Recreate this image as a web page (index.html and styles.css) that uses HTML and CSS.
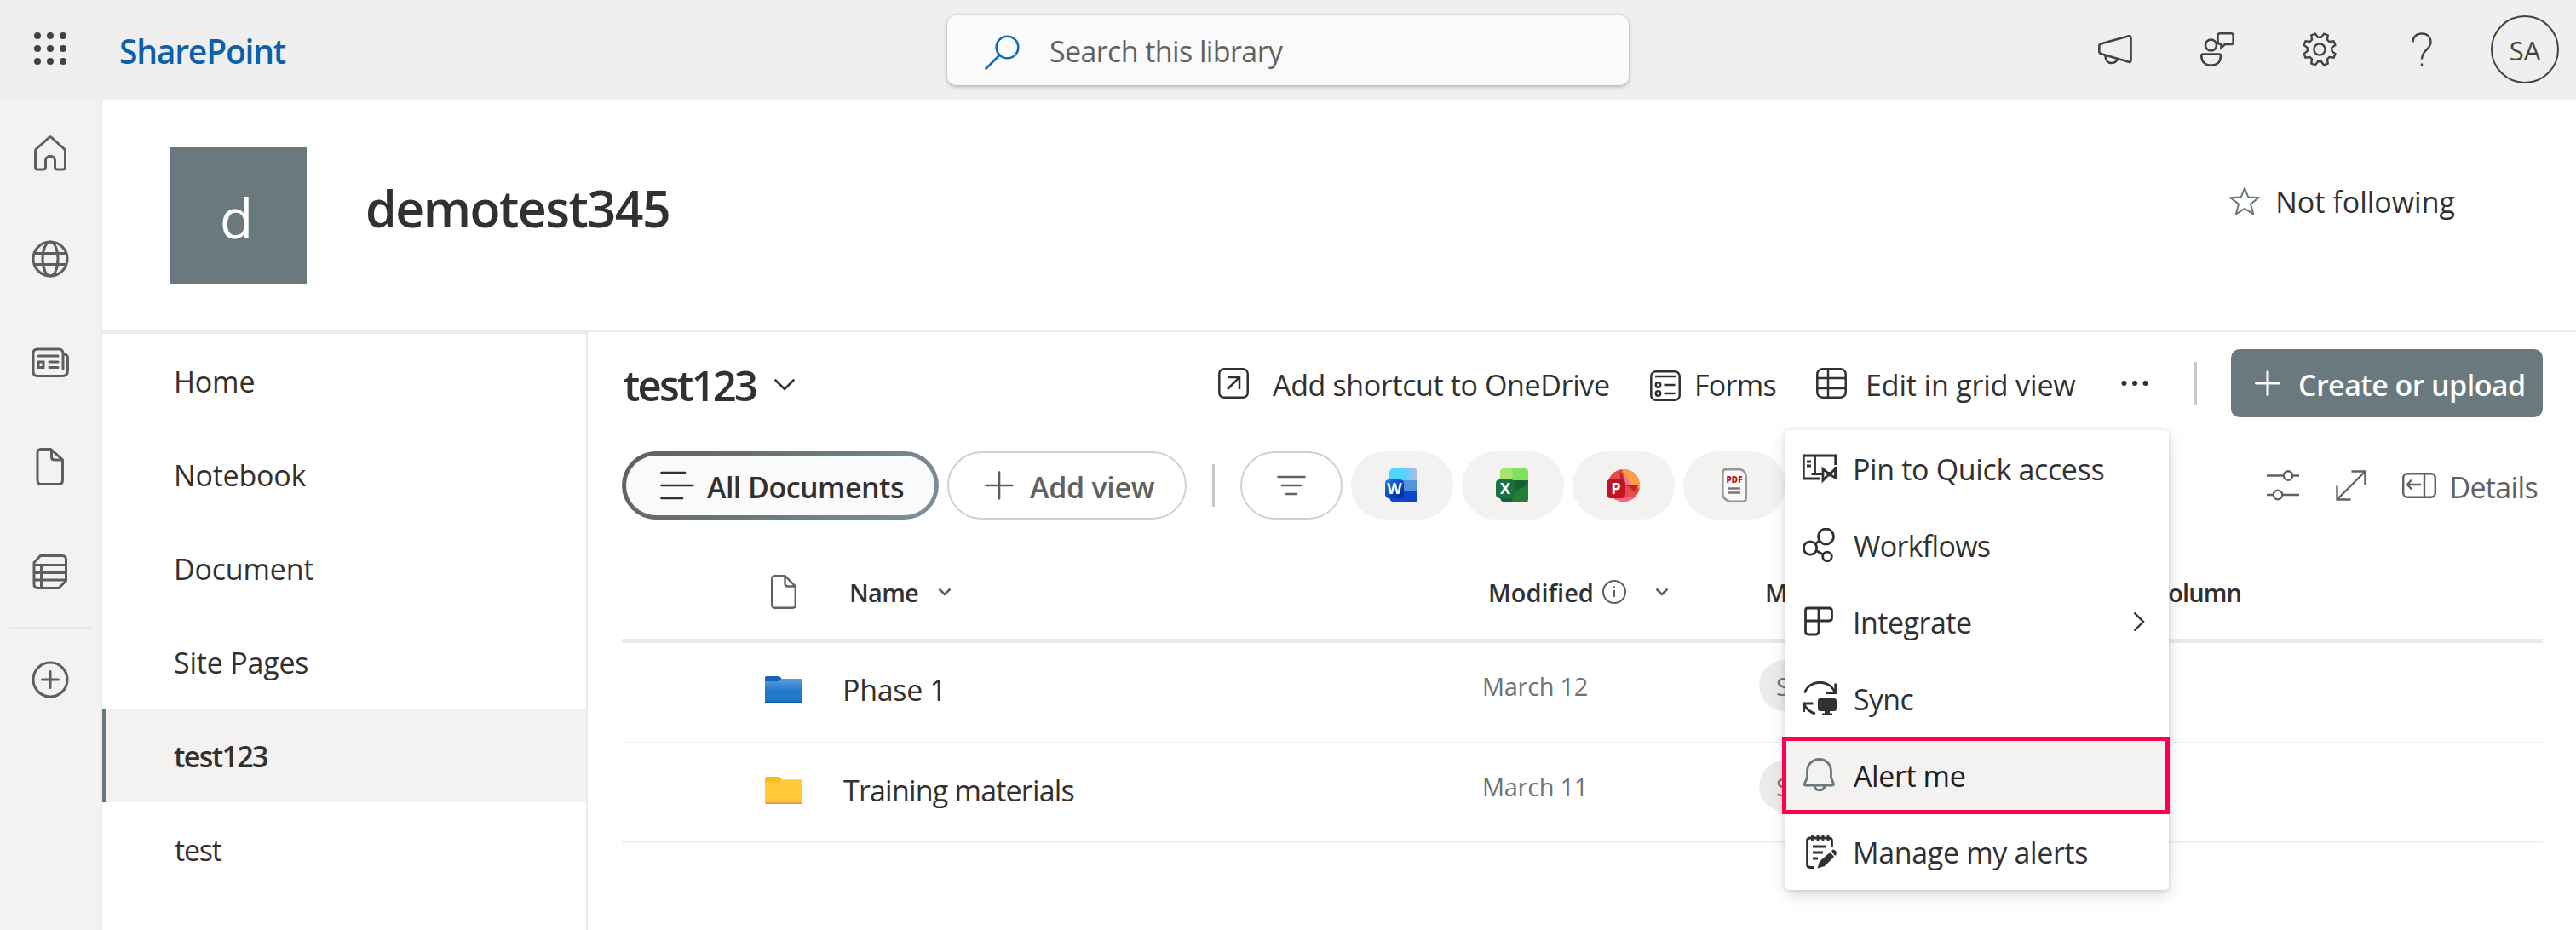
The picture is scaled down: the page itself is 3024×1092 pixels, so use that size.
FILE: index.html
```html
<!DOCTYPE html>
<html lang="en">
<head>
    <meta charset="UTF-8">
    <title>demotest345 - test123</title>
    <link rel="stylesheet" href="styles.css">
</head>
<body>

<header class="suite">
    <div class="suiteLeft">
        <svg class="waffle" width="39" height="38" viewBox="0 0 39 38" fill="#424242">
            <circle cx="4" cy="4" r="4"/><circle cx="19" cy="4" r="4"/><circle cx="34" cy="4" r="4"/>
            <circle cx="4" cy="19" r="4"/><circle cx="19" cy="19" r="4"/><circle cx="34" cy="19" r="4"/>
            <circle cx="4" cy="34" r="4"/><circle cx="19" cy="34" r="4"/><circle cx="34" cy="34" r="4"/>
        </svg>
        <span class="brand">SharePoint</span>
    </div>
    <div class="search">
        <svg width="41" height="41" viewBox="0 0 41 41" fill="none" stroke="#0f6cbd" stroke-width="2.6" stroke-linecap="round">
            <circle cx="26.5" cy="14.5" r="12.8"/><path d="M17.5 23.5 1.5 39.5"/>
        </svg>
        <span>Search this library</span>
    </div>
    <div class="suiteRight">
        <svg width="40" height="40" viewBox="0 0 40 40">
            <path d="M3 13.5 36 4.3Q38.5 4 38.5 6.5V32.5Q38.5 35.5 36 34.7L3 25Q1.3 24.4 1.3 22.5V16Q1.3 14 3 13.5Z"/>
            <path d="M8.5 27C8.5 33 11.5 36 15.5 36C19.5 36 22 33.5 23 31"/>
        </svg>
        <svg width="40" height="40" viewBox="0 0 40 40">
            <circle cx="12.5" cy="15" r="6.5"/>
            <path d="M3 25.5H22Q24 25.5 24 27.5C24 35 19 38.7 12.5 38.7C6 38.7 1.3 35 1.3 27.5Q1.3 25.5 3 25.5Z"/>
            <path d="M23 1.3H36Q38.7 1.3 38.7 4V11.5Q38.7 14 36 14H29L24.5 18V14Q20.5 14 20.5 11V4Q20.5 1.3 23 1.3Z"/>
        </svg>
        <svg width="40" height="40" viewBox="0 0 40 40">
            <path d="M14.9 1.6 10.3 3.5 11 8.6 8.6 11 3.5 10.3 1.6 14.9 5.7 18V22L1.6 25.1 3.5 29.7 8.6 29 11 31.4 10.3 36.5 14.9 38.4 18 34.3H22L25.1 38.4 29.7 36.5 29 31.4 31.4 29 36.5 29.7 38.4 25.1 34.3 22V18L38.4 14.9 36.5 10.3 31.4 11 29 8.6 29.7 3.5 25.1 1.6 22 5.7H18Z"/>
            <circle cx="20" cy="20" r="6.6"/>
        </svg>
        <svg width="40" height="40" viewBox="0 0 40 40">
            <path d="M9.5 11.5C9.5 5 14 1.5 20 1.5C26.5 1.5 30.5 5.500 30.5 11.5C30.5 20 20 20.500 20 31.5"/>
            <path d="M20 36.5V39.5"/>
        </svg>
        <span class="avatar">SA</span>
    </div>
</header>

<div class="page">
    <aside class="rail">
        <svg class="home" width="44" height="44" viewBox="0 0 44 44">
            <path d="M20.5 3.5Q22 2 23.5 3.5L38.500 17Q39.5 18 39.5 19.5V38Q39.5 41 37 41H30Q27.5 41 27.5 38.5V30C27.5 24 16.5 24 16.5 30V38.5Q16.5 41 14 41H7Q4.5 41 4.5 38V19.5Q4.5 18 5.5 17Z"/>
        </svg>
        <svg class="globe" width="44" height="44" viewBox="0 0 44 44">
            <circle cx="22" cy="22" r="20"/><ellipse cx="22" cy="22" rx="9" ry="20"/><path d="M3.5 15.5H40.5M3.5 28.5H40.5"/>
        </svg>
        <svg class="news" width="44" height="44" viewBox="0 0 44 44">
            <path d="M37 29V11Q37 6 32 6H7Q2 6 2 11V32Q2 37.5 7 37.5H36Q42.5 37.5 42.5 31V16Q42.5 12.5 38 12"/>
            <path d="M8 14H31M21 21H31M21 27.5H31M8 21H14V27.5H8Z"/>
        </svg>
        <svg class="doc" width="44" height="44" viewBox="0 0 44 44">
            <path d="M11 1.5H22.5L36.5 14V38Q36.5 42.5 32 42.5H11Q7 42.5 7 38V6Q7 1.5 11 1.5ZM23.5 2.5V10.5Q23.5 14 27 14H36"/>
        </svg>
        <svg class="lists" width="44" height="44" viewBox="0 0 44 44">
            <path d="M10.5 3.5H36Q40.5 3.5 40.5 8V33L32 41.5H8Q3 41.5 3 37V11.5ZM3 14.5H40.5M3 23.5H40.5M3 32H40.5M11.5 14.5V41.5"/>
        </svg>
        <hr>
        <svg class="plus" width="44" height="44" viewBox="0 0 44 44">
            <circle cx="22" cy="22" r="20"/><path d="M22 12.5V31.5M12.5 22H31.5"/>
        </svg>
    </aside>

    <div class="site">
        <div class="siteHead">
            <div class="logo">d</div>
            <h1>demotest345</h1>
            <div class="follow">
                <svg width="36" height="34" viewBox="0 0 36 34" fill="none" stroke="#69797e" stroke-width="2">
                    <path d="M18 1.8 22.2 12.4 34.5 13.1 25 20.6 28.2 32.4 18 26 7.8 32.4 11 20.6 1.5 13.1 13.8 12.4Z"/>
                </svg>
                <span>Not following</span>
            </div>
        </div>

        <div class="siteBody">
            <nav class="nav">
                <a>Home</a>
                <a>Notebook</a>
                <a>Document</a>
                <a>Site Pages</a>
                <a class="selected">test123</a>
                <a class="last">test</a>
            </nav>

            <main class="library">
                <div class="commands">
                    <h2>test123</h2>
                    <svg class="titleChevron" width="24" height="14" viewBox="0 0 24 14" fill="none" stroke="#323130" stroke-width="2.6" stroke-linecap="round"><path d="M1.5 1.5 12 12 22.5 1.5"/></svg>
                    <div class="cmd shortcut">
                        <svg width="36" height="36" viewBox="0 0 36 36"><rect x="1.3" y="1.3" width="33.4" height="33.4" rx="5.5"/><path d="M11 11H25V25M25 11 11 25"/></svg>
                        <span>Add shortcut to OneDrive</span>
                    </div>
                    <div class="cmd forms">
                        <svg width="36" height="36" viewBox="0 0 36 36"><rect x="1.3" y="1.3" width="33.4" height="33.4" rx="5.5"/><path d="M6 7H30M16.5 17H29.5M16.5 27H29.5"/><circle cx="9.5" cy="17" r="2.7"/><circle cx="9.5" cy="27" r="2.7"/></svg>
                        <span>Forms</span>
                    </div>
                    <div class="cmd grid">
                        <svg width="36" height="36" viewBox="0 0 36 36"><rect x="1.3" y="1.3" width="33.4" height="33.4" rx="6"/><path d="M1.3 12H34.7M1.3 24H34.7M14 1.3V34.7"/></svg>
                        <span>Edit in grid view</span>
                    </div>
                    <div class="cmd more">
                        <svg width="32" height="8" viewBox="0 0 32 8" class="dots"><circle cx="3.5" cy="4" r="3"/><circle cx="16" cy="4" r="3"/><circle cx="28.5" cy="4" r="3"/></svg>
                    </div>
                    <span class="bar"></span>
                    <button class="create">
                        <svg width="30" height="30" viewBox="0 0 30 30" fill="none" stroke="#fff" stroke-width="3" stroke-linecap="round"><path d="M15 1.5V28.5M1.5 15H28.5"/></svg>
                        <span>Create or upload</span>
                    </button>
                </div>

                <div class="views">
                    <div class="pill current">
                        <svg width="40" height="34" viewBox="0 0 40 34" fill="none" stroke="#323130" stroke-width="2.6" stroke-linecap="round"><path d="M1.5 2H29M1.5 17H38.5M1.5 32H26"/></svg>
                        <span>All Documents</span>
                    </div>
                    <div class="pill add">
                        <svg width="34" height="34" viewBox="0 0 34 34" fill="none" stroke="#605e5c" stroke-width="2.6" stroke-linecap="round"><path d="M17 1.5V32.5M1.5 17H32.5"/></svg>
                        <span>Add view</span>
                    </div>
                    <span class="bar"></span>
                    <div class="pill filter">
                        <svg width="34" height="24" viewBox="0 0 34 24" fill="none" stroke="#616161" stroke-width="2.6" stroke-linecap="round"><path d="M1.5 2H32.5M6 12H28M11 22H23"/></svg>
                    </div>
                    <div class="chip">
                        <svg width="38" height="40" viewBox="0 0 38 40">
                            <defs>
                                <linearGradient id="wTop"><stop offset="0.5" stop-color="#50d5ff"/><stop offset="0.9" stop-color="#a3bfe8"/></linearGradient>
                                <linearGradient id="wBadge" x2="1" y2="1"><stop offset="0" stop-color="#2b7ad0"/><stop offset="0.6" stop-color="#0a3fc0"/><stop offset="1" stop-color="#062a78"/></linearGradient>
                            </defs>
                            <path d="M10 0H34Q38 0 38 4V16H5V5Q5 0 10 0Z" fill="url(#wTop)"/>
                            <path d="M5 14H38V28H5Z" fill="#5096dd"/>
                            <path d="M5 30Q20 26 38 26V36Q38 40 34 40H12Q5 40 5 33Z" fill="#0f45cc"/>
                            <rect y="13" width="22" height="22" rx="4.5" fill="url(#wBadge)"/>
                            <text x="11" y="30" class="letter">W</text>
                        </svg>
                    </div>
                    <div class="chip">
                        <svg width="38" height="40" viewBox="0 0 38 40">
                            <path d="M10 0H34Q38 0 38 4V16H5V5Q5 0 10 0Z" fill="#80e060"/>
                            <path d="M5 14V5Q5 0 10 0H18Q22 6 18 14Z" fill="#a4e56c"/>
                            <path d="M5 14H38V36Q38 40 34 40H12Q5 40 5 33Z" fill="#237d35"/>
                            <path d="M20 14H38Q36 22 26 25Q20 28 19 40H12Q5 40 5 33V20Z" fill="#186030"/>
                            <rect y="13" width="22" height="22" rx="4.5" fill="#1d7040"/>
                            <text x="11" y="30" class="letter">X</text>
                        </svg>
                    </div>
                    <div class="chip">
                        <svg width="39" height="40" viewBox="0 0 39 40">
                            <circle cx="20" cy="20" r="19" fill="#e44c45"/>
                            <path d="M18 1.1A19 19 0 0 1 38.5 24Q30 19 20 20Q22 9 18 1.1Z" fill="#ff9c48"/>
                            <path d="M20 9Q27 12 29 20H20Z" fill="#f3709d"/>
                            <path d="M14 2.5Q21 7 20 20H15Q18 9 14 2.5ZM22 20H37Q36 25 32 28Q30 22 22 20Z" fill="#c9202c"/>
                            <path d="M10 36.2Q20 31 32 34.7Q20 43 10 36.2Z" fill="#ff5f8c"/>
                            <rect y="13" width="22" height="22" rx="4.5" fill="#c01525"/>
                            <text x="11" y="30" class="letter">P</text>
                        </svg>
                    </div>
                    <div class="chip pdf">
                        <svg width="30" height="40" viewBox="0 0 30 40">
                            <path d="M5 1.3H22Q28.7 3 28.7 10V35Q28.7 38.7 25 38.7H9Q1.3 36 1.3 29V5Q1.3 1.3 5 1.3Z" fill="#fafafa" stroke="#979593" stroke-width="2.5"/>
                            <text x="15" y="17" class="pdfText">PDF</text>
                            <path d="M8 23.5H22M8 28.5H22" stroke="#797775" stroke-width="2.4"/>
                        </svg>
                    </div>
                    <div class="viewTools">
                        <svg width="40" height="36" viewBox="0 0 40 36"><path d="M1 6.5H20M32 6.5H39M1 29H8M20 29H39"/><circle cx="26" cy="6.5" r="5.2"/><circle cx="14" cy="29" r="5.2"/></svg>
                        <svg width="36" height="36" viewBox="0 0 36 36"><path d="M18.5 1.5H34.5V17.5M34.5 1.5 1.5 34.5M1.5 18.5V34.5H17.5"/></svg>
                        <svg width="40" height="30" viewBox="0 0 40 30"><rect x="1.2" y="1.2" width="37.6" height="27.6" rx="5"/><path d="M26 1.2V28.8M22 14H6M11 8.5 6 14 11 19.5"/></svg>
                        <span>Details</span>
                    </div>
                </div>

                <div class="table">
                    <div class="row head">
                        <div class="icon"><svg width="30" height="40" viewBox="0 0 30 40" fill="none" stroke="#616161" stroke-width="2.4"><path d="M5 1.2H16.5L28.8 13.5V35Q28.8 38.8 25 38.8H5Q1.2 38.8 1.2 35V5Q1.2 1.2 5 1.2ZM16.5 1.5V10Q16.5 13.5 20 13.5H28.5"/></svg></div>
                        <div class="name"><span>Name</span><svg class="chev" width="16" height="10" viewBox="0 0 16 10"><path d="M1.5 1.5 8 8 14.5 1.5"/></svg></div>
                        <div class="date"><span>Modified</span><svg class="info" width="28" height="28" viewBox="0 0 28 28"><circle cx="14" cy="14" r="13"/><path d="M14 12V20M14 7.5V10"/></svg><svg class="chev" width="16" height="10" viewBox="0 0 16 10"><path d="M1.5 1.5 8 8 14.5 1.5"/></svg></div>
                        <div class="by">Modified By</div>
                        <div class="addColumn">Add column</div>
                    </div>
                    <div class="row">
                        <div class="icon"><svg width="44" height="32" viewBox="0 0 44 32">
                            <defs><linearGradient id="blue" x2="0" y2="1"><stop offset="0" stop-color="#5a9ee0"/><stop offset="0.5" stop-color="#2077cc"/></linearGradient></defs>
                            <path d="M0 2Q0 0 2 0H15Q18 0 19.5 3V8H0Z" fill="#1263b4"/><path d="M0 6H15Q18 6 20 3H42Q44 3 44 5V30Q44 32 42 32H2Q0 32 0 30Z" fill="url(#blue)"/><path d="M0 29.5H44V30Q44 32 42 32H2Q0 32 0 30Z" fill="#0d5aa7"/></svg></div>
                        <div class="name phase">Phase 1</div>
                        <div class="date">March 12</div>
                        <div class="by"><span class="person">SA</span></div>
                    </div>
                    <div class="row second">
                        <div class="icon"><svg width="44" height="32" viewBox="0 0 44 32">
                            <path d="M0 2Q0 0 2 0H15Q18 0 19.5 3V8H0Z" fill="#fbb91f"/><path d="M0 6.5H15Q18 6.5 20 3.3H42Q44 3.3 44 5V30Q44 32 42 32H2Q0 32 0 30Z" fill="#ffc937"/><path d="M0 30H44Q44 32 42 32H2Q0 32 0 30Z" fill="#ef9a4a"/></svg></div>
                        <div class="name training">Training materials</div>
                        <div class="date">March 11</div>
                        <div class="by"><span class="person">SA</span></div>
                    </div>
                </div>
            </main>
        </div>
    </div>

    <div class="menu">
        <div class="item pin">
            <svg width="40" height="40" viewBox="0 0 40 40"><path d="M21 32H1.3V5H38.7V16M38.7 18V31M14.5 5V25M10.5 26.5H23M5 12H10M5 17H10M24 20.5 30 25.5H33L38.5 20.5V31L33 28H30L24 34Z"/></svg>
            <span>Pin to Quick access</span>
        </div>
        <div class="item flows">
            <svg width="40" height="40" viewBox="0 0 40 40"><circle cx="27.5" cy="10" r="9"/><circle cx="9" cy="23.5" r="7.7"/><circle cx="29" cy="33.5" r="5.3"/><path d="M15 18.5 20 15M16 26.5 24 31"/></svg>
            <span>Workflows</span>
        </div>
        <div class="item integrate">
            <svg width="40" height="40" viewBox="0 0 40 40"><path d="M6 4H31Q34.5 4 34.5 7.5V15.5Q34.5 19 31 19H3.5V7Q3.5 4 6 4ZM19 4V31Q19 35 15.5 35H7Q3.5 35 3.5 31.5V19"/></svg>
            <span>Integrate</span>
            <svg class="more" width="14" height="24" viewBox="0 0 14 24"><path d="M1.5 1.5 12 12 1.5 22.5"/></svg>
        </div>
        <div class="item sync">
            <svg width="40" height="40" viewBox="0 0 40 40"><path d="M2.5 13.5C8 -2.5 32 -3 38 13M38.7 2.5V13.5H28M1.5 36V26H12.5M1.5 26.5Q6 35.5 15 38"/><path d="M20 20H37Q40 20 40 23V32Q40 35 37 35H32V37.5H35V39.5H23V37.5H26V35H21Q18 35 18 32V23Q18 20 20 20Z" fill="#323130" stroke="none"/></svg>
            <span>Sync</span>
        </div>
        <div class="item alert">
            <svg width="40" height="40" viewBox="0 0 40 40"><path d="M20 1.5C11 1.5 5.5 8 5.5 16V23L2.3 30.5Q2 32 3.5 32H35Q37 32 36.5 30.5L33.5 23V16C33.5 8 28 1.5 20 1.5ZM14 32.5C15 39.5 25 39.5 26 32.5"/></svg>
            <span>Alert me</span>
        </div>
        <div class="item manage">
            <svg width="40" height="40" viewBox="0 0 40 40"><path d="M14 38.5H9Q5.5 38.5 5.5 35V7.5Q5.5 4 9 4H31Q34.5 4 34.5 7.5V15M11.5 1V7M18 1V7M24 1V7M30 1V7M12 14H28M12 21H24M12 28H18"/><path d="M17.5 39.5 20 31.5 32.5 20.5 37 26 26 37ZM34 19 36 17.5Q41 19 39.5 23.5L38 25Z" fill="#323130" stroke="none"/></svg>
            <span>Manage my alerts</span>
        </div>
    </div>
</div>

</body>
</html>
```
FILE: styles.css
```css
*,
*::after {
    box-sizing: border-box;
}

body {
    margin: 0;
    width: 3024px;
    height: 1092px;
    overflow: hidden;
    font-family: "Open Sans", "Noto Sans", sans-serif;
    font-size: 34px;
    color: #323130;
    background-color: #fff;
    white-space: nowrap;
}

svg {
    display: block;
    flex: none;
}

/* top bar */
.suite {
    display: grid;
    grid-template-columns: 1112px 800px 1fr;
    align-items: center;
    height: 118px;
    background-color: #efefef;
}

.suiteLeft {
    display: flex;
    align-items: center;
    padding-left: 40px;
}

.waffle {
    margin-bottom: 4px;
}

.brand {
    margin-left: 61px;
    font-size: 39px;
    font-weight: 600;
    letter-spacing: -1.2px;
    color: #0f5ea8;
}

.search {
    display: flex;
    align-items: center;
    height: 82px;
    padding-left: 44px;
    border-radius: 10px;
    background-color: #fafafa;
    box-shadow: 0 2px 5px rgba(0, 0, 0, .22), 0 0 3px rgba(0, 0, 0, .14);
    color: #616161;
}

.search svg {
    margin-top: 5px;
}

.search span {
    margin: 2px 0 0 35px;
    letter-spacing: -.6px;
}

.suiteRight {
    display: flex;
    justify-content: flex-end;
    align-items: center;
    gap: 80px;
    padding: 0 20px 2px 0;
    fill: none;
    stroke: #424242;
    stroke-width: 2.6;
}

.suiteRight svg:nth-of-type(3),
.suiteRight svg:nth-of-type(4) {
    stroke-width: 2.4;
}

.suiteRight svg:nth-of-type(4) {
    margin-right: -19px;
}

.avatar {
    width: 80px;
    height: 80px;
    border: 2.5px solid #424242;
    border-radius: 50%;
    font-size: 31px;
    line-height: 79px;
    text-align: center;
    color: #424242;
    stroke: none;
}

.page {
    position: relative;
    display: flex;
    height: 974px;
}

/* app rail */
.rail {
    width: 120px;
    padding: 40px 0 0 37px;
    border-right: 2px solid #e9e7e5;
    background-color: #f3f2f1;
    fill: none;
    stroke: #605e5c;
    stroke-width: 3;
    stroke-linecap: round;
}

.rail .globe {
    margin-top: 80px;
}

.rail .news {
    margin-top: 78px;
}

.rail .doc {
    margin-top: 78px;
}

.rail .lists {
    margin-top: 79px;
}

.rail hr {
    width: 98px;
    height: 2px;
    margin: 43px 0 0 -27px;
    border: 0;
    background-color: #e9e7e5;
}

.rail .plus {
    margin-top: 38px;
}

.site {
    flex: 1;
}

.siteHead {
    display: flex;
    height: 272px;
    padding: 55px 142px 0 80px;
    border-bottom: 2px solid #ebebea;
}

.logo {
    width: 160px;
    height: 160px;
    text-indent: 58px;
    font-size: 64px;
    line-height: 165px;
    color: #fff;
    background-color: #69797e;
}

h1, h2 {
    margin: 0;
    font-weight: 600;
}

h1 {
    margin-left: 69px;
    font-size: 59px;
    line-height: 143px;
    letter-spacing: -1.5px;
}

.follow {
    display: flex;
    align-items: center;
    gap: 18px;
    height: 126px;
    margin-left: auto;
}

.follow span {
    padding-top: 2px;
}

.siteBody {
    display: flex;
    height: 702px;
}

/* left navigation */
.nav {
    width: 570px;
    border-top: 2px solid #ebebea;
    border-right: 2px solid #ebebea;
}

.nav a {
    display: block;
    height: 110px;
    padding-left: 84px;
    line-height: 113px;
    letter-spacing: -.2px;
}

.nav a.selected {
    padding-left: 79px;
    border-left: 5px solid #69797e;
    font-weight: 600;
    letter-spacing: -1.65px;
    background-color: #f3f2f1;
}

.nav a.last {
    padding-left: 85px;
    letter-spacing: -1.2px;
}

/* document library */
.library {
    width: 2334px;
    padding: 0 39px 0 40px;
}

.commands {
    display: flex;
    align-items: center;
    height: 120px;
}

h2 {
    margin: 3px 0 0 2px;
    font-size: 49px;
    letter-spacing: -2.8px;
}

.titleChevron {
    margin: 3px auto 0 22px;
}

.cmd {
    display: flex;
    align-items: center;
    fill: none;
    stroke: #323130;
    stroke-width: 2.5;
}

.cmd span,
.create span {
    padding-top: 4px;
    stroke: none;
}

.shortcut {
    width: 507px;
    gap: 28px;
    letter-spacing: -.37px;
}

.forms {
    width: 195px;
    gap: 16px;
    letter-spacing: -.7px;
}

.forms svg {
    margin-top: 6px;
}

.grid {
    width: 358px;
    gap: 22px;
    letter-spacing: -.15px;
}

.cmd.more {
    width: 86px;
}

.dots {
    fill: #323130;
    stroke: none;
}

.bar {
    width: 3px;
    height: 50px;
    background-color: #c8c8c8;
}

.create {
    display: flex;
    align-items: center;
    gap: 21px;
    width: 366px;
    height: 80px;
    margin-left: 40px;
    padding: 0 0 0 28px;
    border: 0;
    border-radius: 10px;
    font: 600 34px "Open Sans", sans-serif;
    letter-spacing: -.56px;
    color: #fff;
    background-color: #69797e;
}

.views {
    display: flex;
    align-items: center;
    height: 100px;
    padding-top: 20px;
}

.pill {
    display: flex;
    align-items: center;
    height: 80px;
    border: 2.5px solid #d1d1d1;
    border-radius: 40px;
}

.pill span {
    padding-top: 3px;
    font-weight: 600;
}

.current {
    width: 372px;
    padding-left: 40px;
    border: 5px solid transparent;
    background: linear-gradient(#fafafa, #fafafa) padding-box, linear-gradient(135deg, #605e5c, #69797e 50%, #7f9198) border-box;
}

.current span {
    margin-left: 15px;
    letter-spacing: -.55px;
}

.add {
    width: 281px;
    margin-left: 10px;
    padding-left: 42px;
    color: #616161;
}

.add span {
    margin-left: 19px;
    letter-spacing: -.3px;
}

.views .bar {
    margin: 0 30px;
}

.filter {
    justify-content: center;
    width: 120px;
}

.chip {
    display: flex;
    align-items: center;
    justify-content: center;
    width: 120px;
    height: 80px;
    margin-left: 10px;
    padding-right: 2px;
    border-radius: 40px;
    background-color: #f3f2f1;
}

.chip.pdf {
    padding-right: 1px;
}

.letter {
    font-size: 18px;
    font-weight: 700;
    text-anchor: middle;
    fill: #fff;
}

.pdfText {
    font-size: 10px;
    font-weight: 800;
    text-anchor: middle;
    fill: #c50f1f;
}

.viewTools {
    display: flex;
    align-items: center;
    margin-left: auto;
    padding-right: 6px;
    color: #616161;
    fill: none;
    stroke: #616161;
    stroke-width: 2.4;
}

.viewTools svg + svg {
    margin-left: 42px;
}

.viewTools span {
    margin: 4px 0 0 15px;
    letter-spacing: -.65px;
    stroke: none;
}

/* file list */
.row {
    display: grid;
    grid-template-columns: 261px 750px 324px 324px 242px;
    align-items: center;
    height: 118px;
    padding-bottom: 6px;
    border-bottom: 2px solid #f0f0ef;
}

.row.second {
    height: 117px;
}

.row.head {
    height: 145px;
    padding: 30px 0 0;
    border-bottom: 5px solid #ebeae9;
    font-size: 29px;
    font-weight: 600;
}

.row .icon {
    padding-left: 168px;
}

.head .icon {
    padding-left: 175px;
}

.phase {
    margin-left: -2px;
    letter-spacing: -.3px;
}

.training {
    margin-left: -1px;
    letter-spacing: -.8px;
}

.row .date {
    padding-bottom: 9px;
    margin-left: -1px;
    font-size: 29px;
    letter-spacing: -.3px;
    color: #6b7375;
}

.row .by {
    padding-bottom: 10px;
}

.head .name,
.head .date {
    display: flex;
    align-items: center;
    padding: 0 0 0 6px;
    margin-left: 0;
    color: #323130;
    letter-spacing: 0;
}

.head .name {
    letter-spacing: -.7px;
}

.head .by {
    padding: 0 0 0 7px;
}

.addColumn {
    text-align: right;
    letter-spacing: -.9px;
}

.chev {
    margin-left: 23px;
    fill: none;
    stroke: #605e5c;
    stroke-width: 2.6;
}

.info {
    margin-left: 10px;
    fill: none;
    stroke: #605e5c;
    stroke-width: 2;
}

.info + .chev {
    margin-left: 34px;
}

.person {
    display: block;
    width: 200px;
    height: 60px;
    padding-left: 20px;
    border-radius: 30px;
    font-size: 29px;
    line-height: 61px;
    color: #6b7375;
    background-color: #edebe9;
}

/* overflow menu of the command bar */
.menu {
    position: absolute;
    left: 2096px;
    top: 387px;
    width: 450px;
    height: 540px;
    border-radius: 5px;
    background-color: #fff;
    box-shadow: 0 6px 18px rgba(0, 0, 0, .15), 0 1px 5px rgba(0, 0, 0, .12);
}

.item {
    position: relative;
    display: flex;
    align-items: center;
    gap: 19px;
    height: 90px;
    padding: 0 28px 0 20px;
    letter-spacing: -.35px;
    fill: none;
    stroke: #323130;
    stroke-width: 2.8;
}

.item span {
    padding-top: 2px;
    stroke: none;
}

.item .more {
    margin-left: auto;
    stroke-width: 2.4;
}

.flows span,
.sync span,
.alert span {
    margin-left: 1px;
}

.flows,
.sync {
    letter-spacing: -.7px;
}

.integrate {
    letter-spacing: -.5px;
}

.alert {
    letter-spacing: -.4px;
    color: #201f1e;
    stroke: #69797e;
    background-color: #f3f2f1;
}

.alert::after {
    content: "";
    position: absolute;
    left: -4px;
    top: 0;
    width: 455px;
    height: 91px;
    border: 5px solid #ff0050;
}
```
